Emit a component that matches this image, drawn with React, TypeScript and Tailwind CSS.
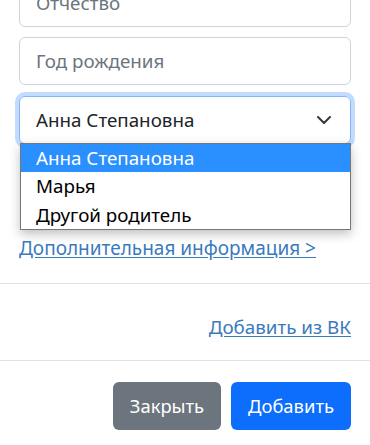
const options = ["Анна Степановна", "Марья", "Другой родитель"];

const App = () => {
  return (
    <div className="w-[370px] h-[445px] overflow-hidden bg-white font-['Noto_Sans',sans-serif] text-[#212529]">
      <div className="flex flex-col px-[19px]">
        <div className="mt-[-21px] h-12 flex items-center px-4 border border-[#ced4da] rounded-md text-[18.8px] text-[#6c757d]">
          Отчество
        </div>
        <div className="mt-[10px] h-12 flex items-center px-4 border border-[#ced4da] rounded-md text-[18.8px] text-[#6c757d]">
          Год рождения
        </div>
        <div className="relative mt-[11px]">
          <div className="h-12 flex items-center justify-between pl-4 pr-[19px] border border-[#86b7fe] rounded-md ring-4 ring-[#0d6efd]/25 text-[18.8px]">
            <span>Анна Степановна</span>
            <svg width="14" height="8" viewBox="0 0 14 8" fill="none">
              <path d="M1 1l6 6 6-6" stroke="#343a40" strokeWidth="2" strokeLinecap="round" strokeLinejoin="round" />
            </svg>
          </div>
          <ul className="absolute left-px right-0 top-[47px] bg-white border border-[#767676] shadow-[0_4px_10px_rgba(0,0,0,0.25)] text-[18.8px] text-black">
            {options.map((o, i) => (
              <li
                key={o}
                className={i === 0 ? "h-[28.3px] flex items-center pl-[15px] bg-[#2a8fff] text-white" : "h-[28.3px] flex items-center pl-[15px]"}
              >
                {o}
              </li>
            ))}
          </ul>
        </div>
        <a href="#" className="mt-[91px] self-start text-[19px] leading-[27px] text-[#3a7abd] underline underline-offset-2">
          Дополнительная информация &gt;
        </a>
      </div>
      <div className="mt-[21px] border-t border-[#dee2e6] h-[77px] flex items-start justify-end px-[19px] pt-[30px]">
        <a href="#" className="text-[18.8px] leading-[27px] text-[#3a7abd] underline underline-offset-2">
          Добавить из ВК
        </a>
      </div>
      <div className="border-t border-[#dee2e6] flex justify-end gap-[10px] px-[19px] pt-[21px]">
        <button className="w-[108px] h-12 rounded-md bg-[#6c757d] text-white text-[18.4px]">Закрыть</button>
        <button className="w-[120px] h-12 rounded-md bg-[#0d6efd] text-white text-[18.4px]">Добавить</button>
      </div>
    </div>
  );
};

export default App;
